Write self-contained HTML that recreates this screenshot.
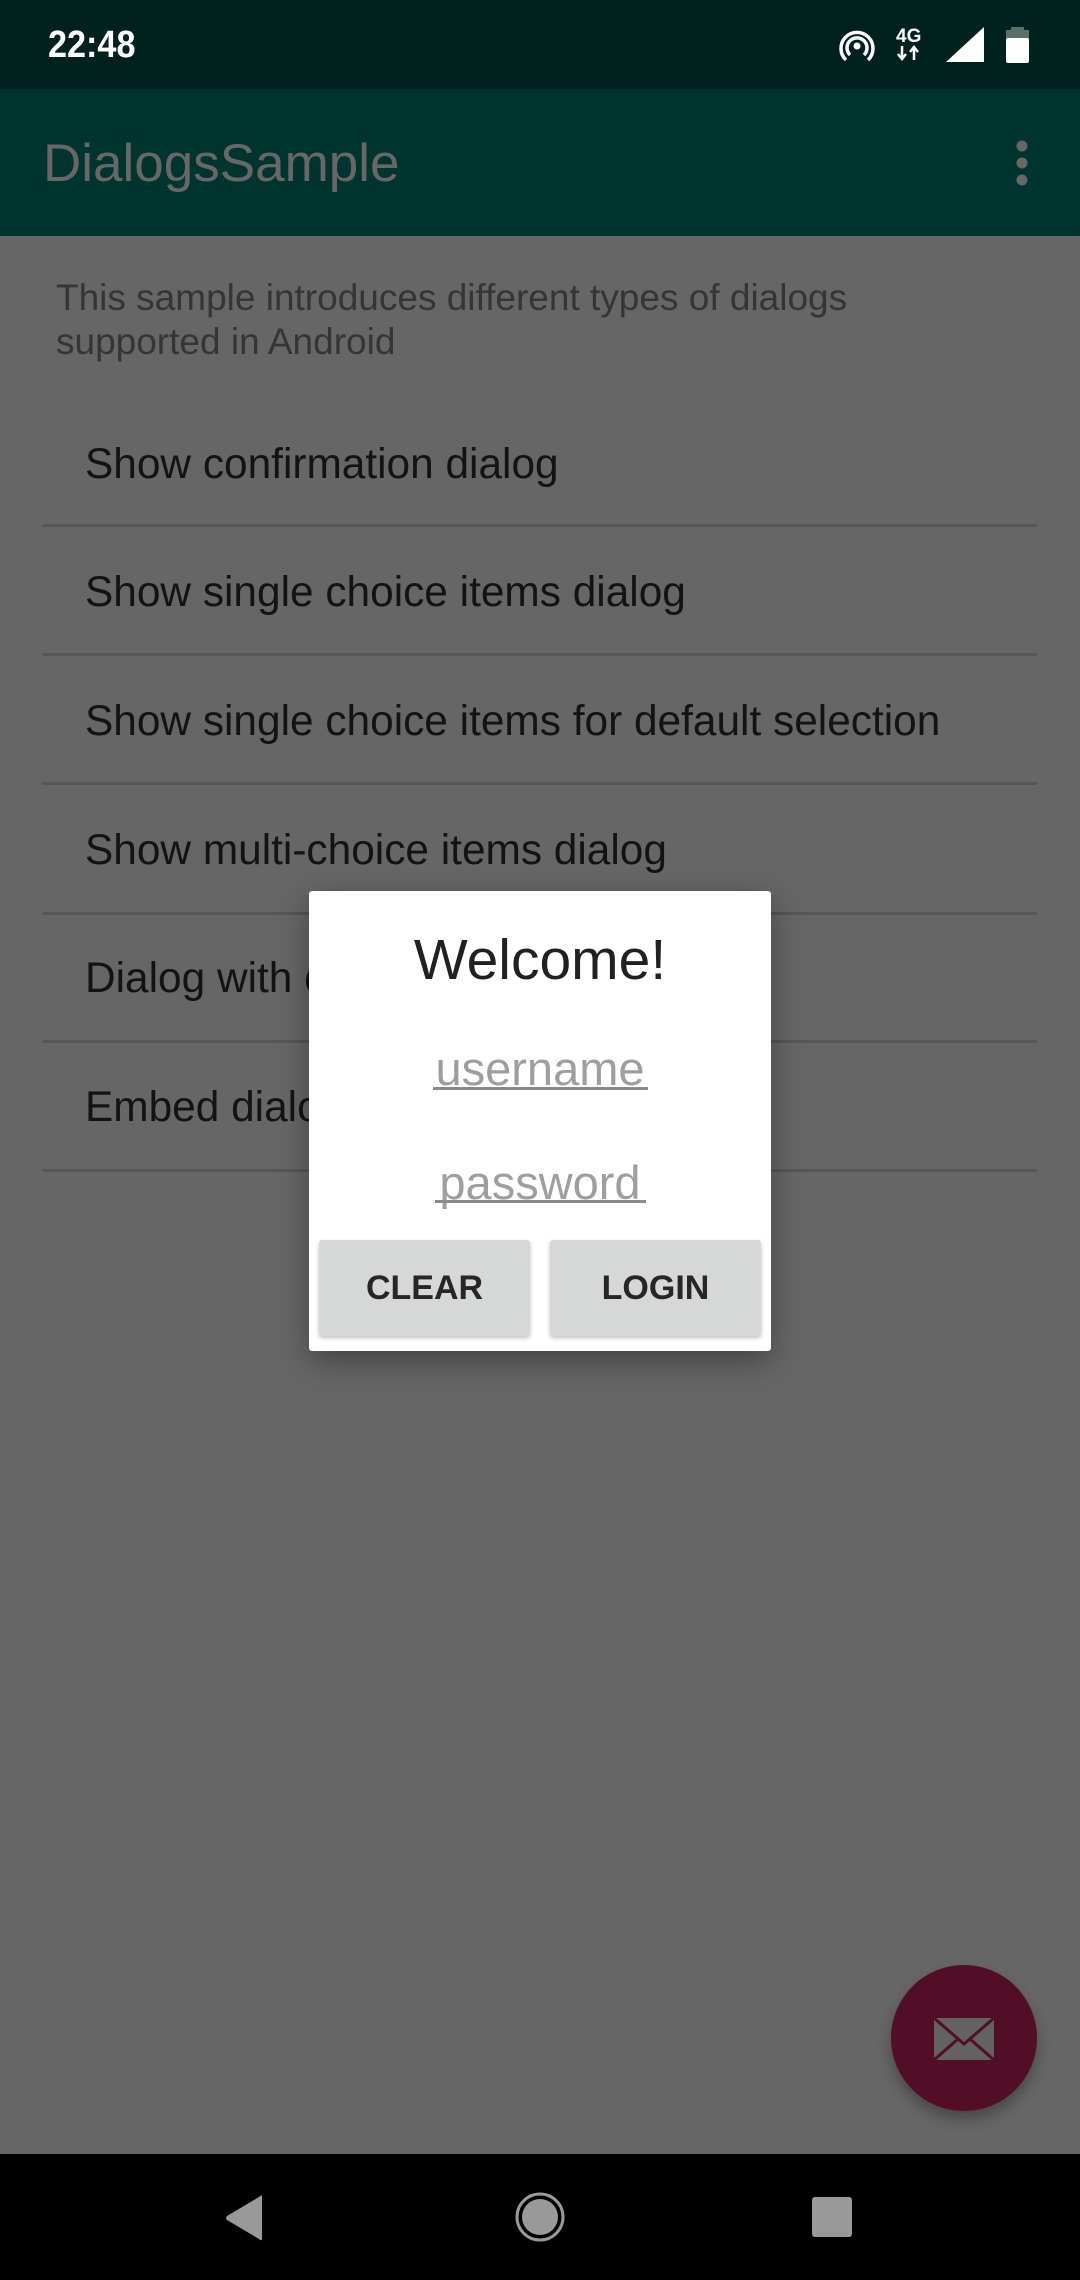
<!DOCTYPE html>
<html><head><meta charset="utf-8"><style>
*{margin:0;padding:0;box-sizing:border-box}
body{width:1080px;height:2280px;position:relative;background:#666;font-family:"Liberation Sans",Roboto,sans-serif;overflow:hidden}
.a{position:absolute;white-space:nowrap}
.item{position:absolute;left:85px;font-size:42.4px;color:#131313}
.div{position:absolute;left:42px;width:995px;height:3px;background:#565656}
</style></head><body>
<div class="a" style="left:0;top:0;width:1080px;height:89px;background:#00211d"></div>
<div class="a" style="left:48px;top:22px;font-size:38px;color:#fff;line-height:46px;font-weight:bold;transform:scaleX(0.9);transform-origin:left">22:48</div>
<svg class="a" style="left:838px;top:24px" width="220" height="44" viewBox="0 0 220 44">
 <g fill="none" stroke="#fff" stroke-width="3.5">
  <path d="M8 36 A16 16 0 1 1 30 36"/><path d="M12 31 A10 10 0 1 1 26 31"/>
 </g><circle cx="19" cy="22" r="3.5" fill="#fff"/>
 <text x="58" y="18" font-size="19" fill="#fff" font-family="Liberation Sans" font-weight="bold">4G</text>
 <path d="M64 22v12M60 30l4 5 4-5M76 36v-12M72 28l4-5 4 5" stroke="#fff" stroke-width="2.5" fill="none"/>
 <path d="M108 38 L146 3 V38 Z" fill="#fff"/>
 <rect x="168" y="6" width="23" height="10" fill="#5a6e6a"/><rect x="168" y="14" width="23" height="25" rx="2" fill="#fff"/><rect x="173" y="3" width="13" height="5" fill="#5a6e6a"/>
</svg>
<div class="a" style="left:0;top:89px;width:1080px;height:147px;background:#00352f"></div>
<div class="a" style="left:43px;top:132px;font-size:53px;color:#676767;line-height:64px">DialogsSample</div>
<svg class="a" style="left:1010px;top:138px" width="24" height="50"><circle cx="12" cy="8" r="5.5" fill="#676767"/><circle cx="12" cy="25" r="5.5" fill="#676767"/><circle cx="12" cy="42" r="5.5" fill="#676767"/></svg>
<div class="a" style="left:56px;top:276px;font-size:37px;color:#353535;line-height:44px">This sample introduces different types of dialogs<br>supported in Android</div>
<div class="item" style="top:440px">Show confirmation dialog</div>
<div class="div" style="top:524px"></div>
<div class="item" style="top:568px">Show single choice items dialog</div>
<div class="div" style="top:653px"></div>
<div class="item" style="top:697px">Show single choice items for default selection</div>
<div class="div" style="top:782px"></div>
<div class="item" style="top:826px">Show multi-choice items dialog</div>
<div class="div" style="top:912px"></div>
<div class="item" style="top:954px">Dialog with custom layout</div>
<div class="div" style="top:1040px"></div>
<div class="item" style="top:1083px">Embed dialog fragment</div>
<div class="div" style="top:1169px"></div>
<!-- dialog -->
<div class="a" style="left:309px;top:891px;width:462px;height:460px;background:#fff;border-radius:3px;box-shadow:0 10px 30px rgba(0,0,0,.35)">
 <div class="a" style="left:0;width:462px;top:36px;text-align:center;font-size:57px;color:#212121;line-height:66px">Welcome!</div>
 <div class="a" style="left:0;width:462px;top:150px;text-align:center;font-size:47px;color:#9e9e9e;line-height:56px">username</div>
 <div class="a" style="left:124px;top:196px;width:215px;height:3px;background:#8a8a8a"></div>
 <div class="a" style="left:0;width:462px;top:264px;text-align:center;font-size:47px;color:#9e9e9e;line-height:56px">password</div>
 <div class="a" style="left:126px;top:309px;width:211px;height:3px;background:#8a8a8a"></div>
 <div class="a" style="left:10px;top:349px;width:211px;height:96px;background:#d6d7d7;border-radius:3px;box-shadow:0 2px 4px rgba(0,0,0,.25);text-align:center;line-height:96px;font-size:34px;font-weight:bold;color:#262626">CLEAR</div>
 <div class="a" style="left:241px;top:349px;width:211px;height:96px;background:#d6d7d7;border-radius:3px;box-shadow:0 2px 4px rgba(0,0,0,.25);text-align:center;line-height:96px;font-size:34px;font-weight:bold;color:#262626">LOGIN</div>
</div>
<!-- FAB -->
<div class="a" style="left:891px;top:1965px;width:146px;height:146px;border-radius:50%;background:#530e27;box-shadow:0 8px 14px rgba(0,0,0,.3)"></div>
<svg class="a" style="left:933px;top:2017px" width="62" height="44" viewBox="0 0 62 44"><rect x="1" y="1" width="60" height="42" fill="#626262"/><path d="M1 1 L31 27 L61 1 M1 43 L25 22 M61 43 L37 22" stroke="#530e27" stroke-width="3" fill="none"/></svg>
<!-- nav -->
<div class="a" style="left:0;top:2154px;width:1080px;height:126px;background:#000"></div>
<svg class="a" style="left:0;top:2154px" width="1080" height="126">
 <path d="M262 42 L262 84 Q262 88 259 85 L227 66 Q225 64 227 62 L259 43 Q262 40 262 42Z" fill="#999"/>
 <circle cx="540" cy="63" r="23" fill="none" stroke="#999" stroke-width="3"/><circle cx="540" cy="63" r="18" fill="#999"/>
 <rect x="812" y="43" width="40" height="40" rx="3" fill="#999"/>
</svg>
</body></html>
